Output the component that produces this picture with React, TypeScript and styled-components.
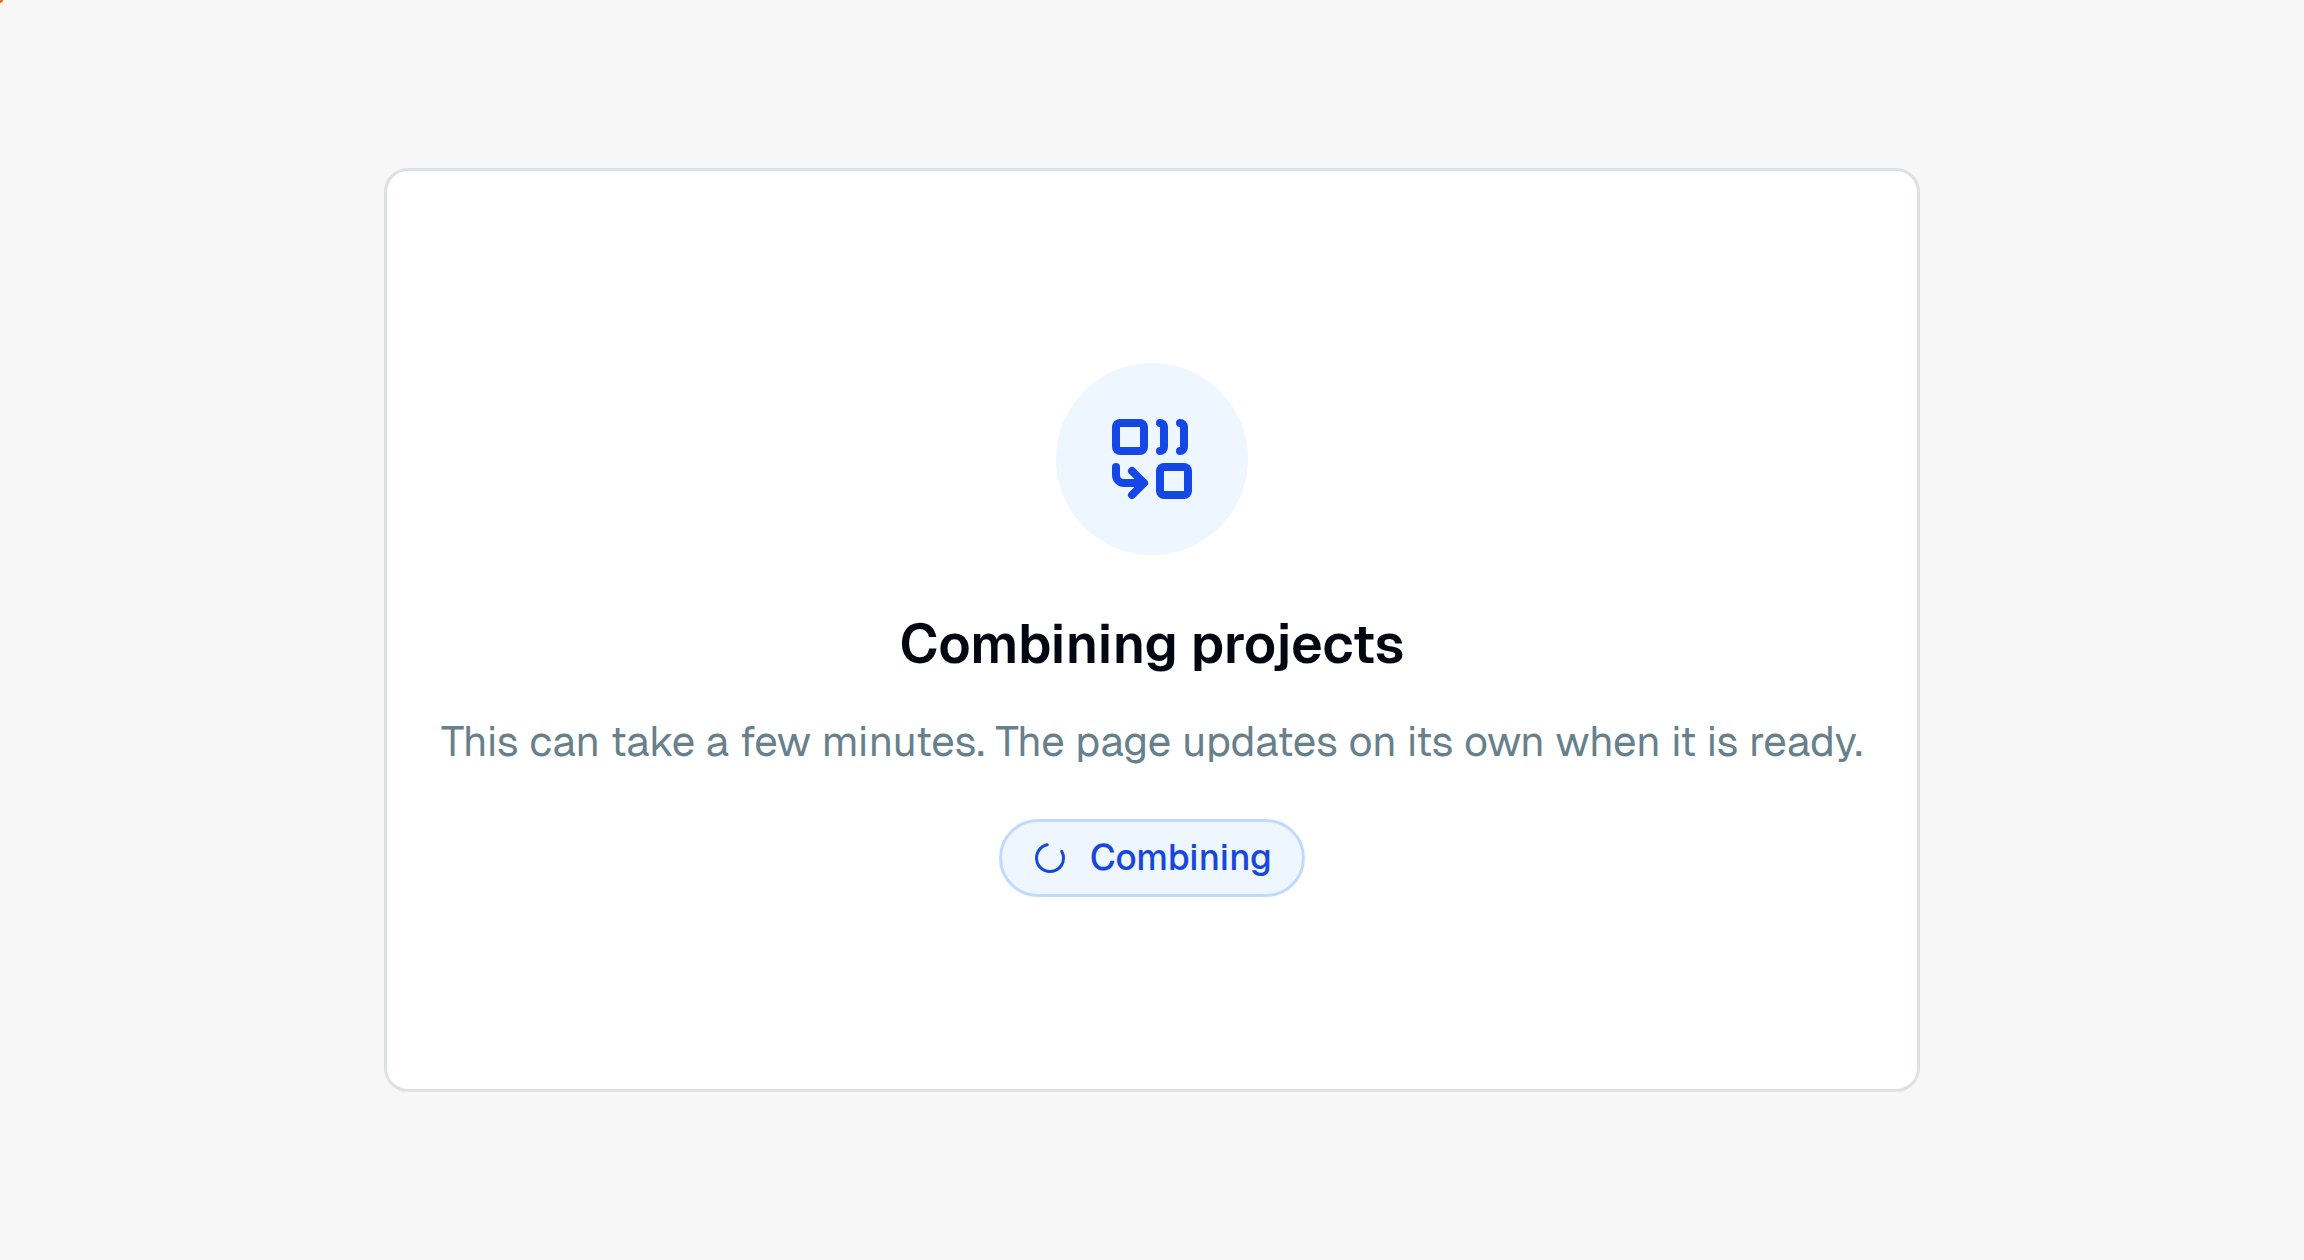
import React from "react";
import styled, { createGlobalStyle } from "styled-components";

const GlobalStyle = createGlobalStyle`
  *, *::before, *::after { box-sizing: border-box; }
  body {
    margin: 0;
    background: #f7f7f7;
    font-family: Geist, Inter, "Liberation Sans", sans-serif;
    -webkit-font-smoothing: antialiased;
  }
`;

const Page = styled.main`
  display: flex;
  flex-direction: column;
  min-height: 100vh;
  padding: 168px 16.6667%;
`;

const CornerMark = styled.span`
  position: absolute;
  top: 0;
  left: 0;
  width: 3px;
  height: 3px;
  background: #ff6900;
  border-bottom-right-radius: 100%;
`;

const Card = styled.section`
  display: flex;
  flex: 1;
  flex-direction: column;
  align-items: center;
  justify-content: center;
  padding: 48px;
  border: 3px solid #dce2e3;
  border-radius: 24px;
  background: #ffffff;
  text-align: center;
`;

const IconCircle = styled.div`
  display: grid;
  place-items: center;
  width: 192px;
  height: 192px;
  margin-bottom: 48px;
  border-radius: 50%;
  background: #eef6ff;
  color: #1447e6;
`;

const Title = styled.h1`
  margin: 0 0 26px;
  color: #030712;
  font-size: 54px;
  font-weight: 600;
  line-height: 82px;
`;

const Description = styled.p`
  margin: 0 0 48px;
  color: #67808c;
  font-size: 42px;
  line-height: 60px;
  white-space: nowrap;
`;

const StatusPill = styled.div`
  display: inline-flex;
  align-items: center;
  gap: 22px;
  height: 78px;
  padding: 0 30px;
  border: 3px solid #bedbff;
  border-radius: 39px;
  background: #eef6ff;
  color: #1747dc;
  font-size: 36px;
  font-weight: 500;
  line-height: 48px;
`;

const Icon = styled.svg<{ $size: number }>`
  display: block;
  flex: none;
  width: ${({ $size }) => $size}px;
  height: ${({ $size }) => $size}px;
  fill: none;
  stroke: currentColor;
  stroke-width: 2;
  stroke-linecap: round;
  stroke-linejoin: round;
`;

function CombineIcon() {
  return (
    <Icon $size={96} viewBox="0 0 24 24" aria-hidden="true">
      <path d="M14 3a1 1 0 0 1 1 1v5a1 1 0 0 1-1 1" />
      <path d="M19 3a1 1 0 0 1 1 1v5a1 1 0 0 1-1 1" />
      <path d="m7 15 3 3" />
      <path d="m7 21 3-3H5a2 2 0 0 1-2-2v-2" />
      <rect x="14" y="14" width="7" height="7" rx="1" />
      <rect x="3" y="3" width="7" height="7" rx="1" />
    </Icon>
  );
}

function SpinnerIcon() {
  return (
    <Icon $size={36} viewBox="0 0 24 24" aria-hidden="true">
      <path d="M21 12a9 9 0 1 1-6.219-8.56" transform="rotate(-30 12 12)" />
    </Icon>
  );
}

export default function App() {
  return (
    <>
      <GlobalStyle />
      <CornerMark />
      <Page>
        <Card>
          <IconCircle>
            <CombineIcon />
          </IconCircle>
          <Title>Combining projects</Title>
          <Description>
            This can take a few minutes. The page updates on its own when it is ready.
          </Description>
          <StatusPill role="status">
            <SpinnerIcon />
            Combining
          </StatusPill>
        </Card>
      </Page>
    </>
  );
}
